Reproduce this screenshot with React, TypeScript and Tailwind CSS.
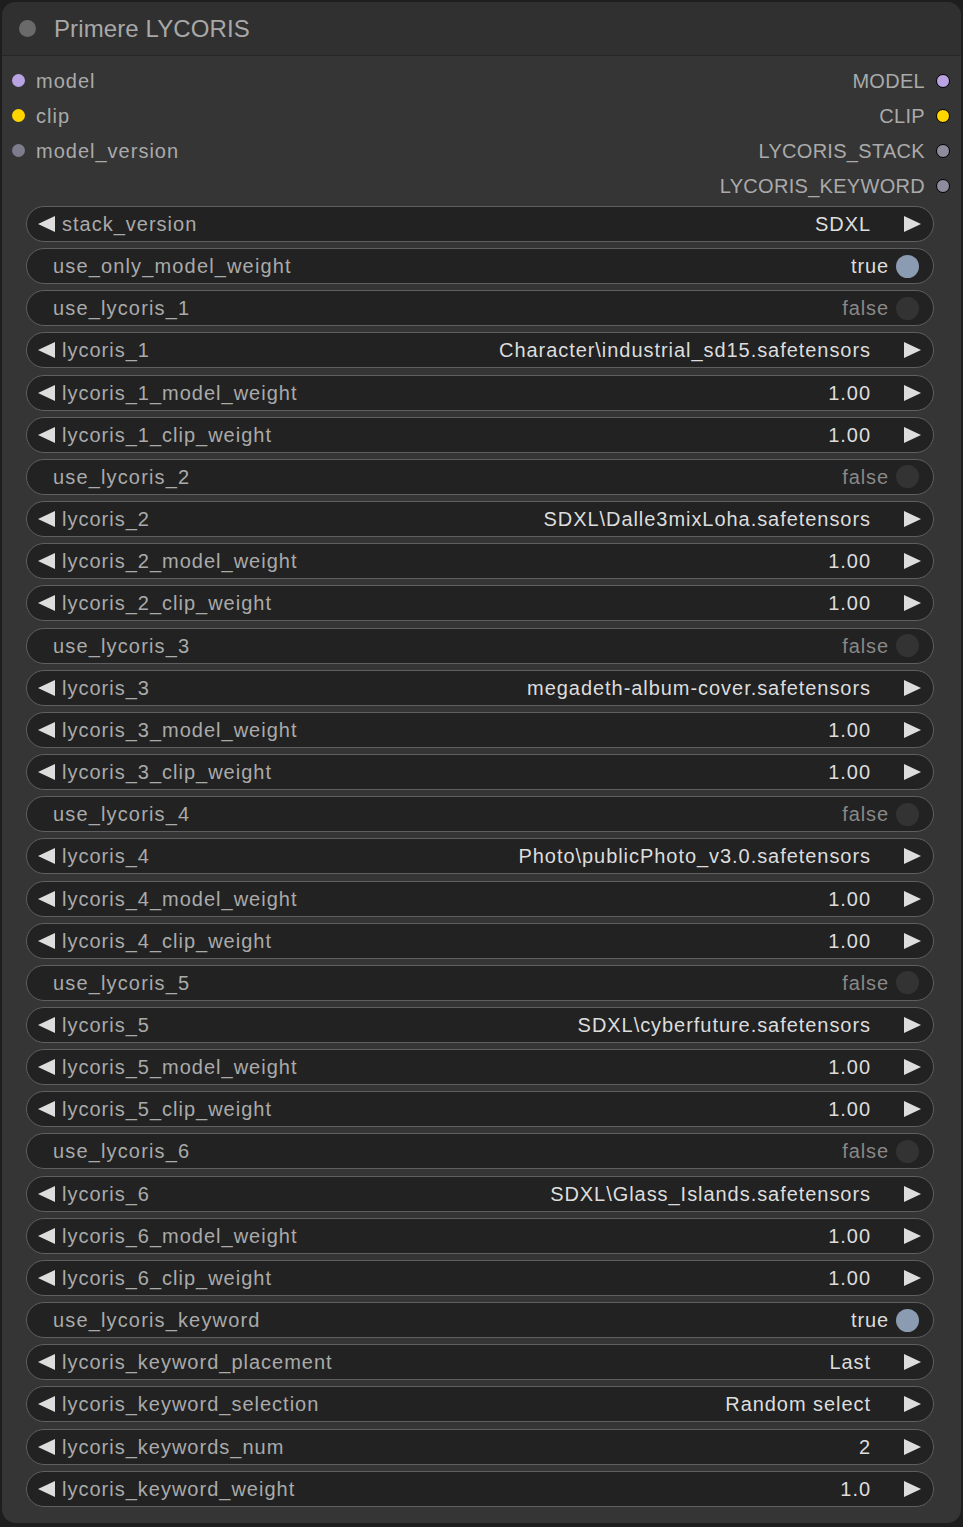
import React from "react";

type W =
  | { kind: "combo"; label: string; value: string }
  | { kind: "toggle"; label: string; value: boolean };

const widgets: W[] = [
  { kind: "combo", label: "stack_version", value: "SDXL" },
  { kind: "toggle", label: "use_only_model_weight", value: true },
];
const files = [
  "Character\\industrial_sd15.safetensors",
  "SDXL\\Dalle3mixLoha.safetensors",
  "megadeth-album-cover.safetensors",
  "Photo\\publicPhoto_v3.0.safetensors",
  "SDXL\\cyberfuture.safetensors",
  "SDXL\\Glass_Islands.safetensors",
];
files.forEach((f, i) => {
  const n = i + 1;
  widgets.push({ kind: "toggle", label: `use_lycoris_${n}`, value: false });
  widgets.push({ kind: "combo", label: `lycoris_${n}`, value: f });
  widgets.push({ kind: "combo", label: `lycoris_${n}_model_weight`, value: "1.00" });
  widgets.push({ kind: "combo", label: `lycoris_${n}_clip_weight`, value: "1.00" });
});
widgets.push({ kind: "toggle", label: "use_lycoris_keyword", value: true });
widgets.push({ kind: "combo", label: "lycoris_keyword_placement", value: "Last" });
widgets.push({ kind: "combo", label: "lycoris_keyword_selection", value: "Random select" });
widgets.push({ kind: "combo", label: "lycoris_keywords_num", value: "2" });
widgets.push({ kind: "combo", label: "lycoris_keyword_weight", value: "1.0" });

const LeftArrow = () => (
  <svg width="17" height="16" viewBox="0 0 17 16" className="shrink-0">
    <polygon points="17,0 17,16 0,8" fill="#dddddd" />
  </svg>
);
const RightArrow = () => (
  <svg width="17" height="16" viewBox="0 0 17 16" className="shrink-0">
    <polygon points="0,0 0,16 17,8" fill="#dddddd" />
  </svg>
);

function Widget({ w }: { w: W }) {
  if (w.kind === "combo") {
    return (
      <div className="flex h-[36px] items-center rounded-full border border-[#5f5f5f] bg-[#222222] pl-[11px] pr-[12px]">
        <LeftArrow />
        <span className="ml-[7px] text-[20px] tracking-[1px] text-[#aaaaaa]">{w.label}</span>
        <span className="ml-auto mr-[33px] whitespace-pre text-[20px] tracking-[0.95px] text-[#dddddd]">{w.value}</span>
        <RightArrow />
      </div>
    );
  }
  return (
    <div className="flex h-[36px] items-center rounded-full border border-[#5f5f5f] bg-[#222222] pl-[26px] pr-[14px]">
      <span className="text-[20px] tracking-[1.15px] text-[#aaaaaa]">{w.label}</span>
      <span
        className={
          "ml-auto mr-[7px] text-[20px] tracking-[0.9px] " +
          (w.value ? "text-[#dddddd]" : "text-[#888888]")
        }
      >
        {w.value ? "true" : "false"}
      </span>
      <div
        className={
          "h-[23px] w-[23px] rounded-full " + (w.value ? "bg-[#8b9bb1]" : "bg-[#333333]")
        }
      />
    </div>
  );
}

function InSlot({ label, color }: { label: string; color: string }) {
  return (
    <div className="flex h-[35px] items-center">
      <div className="ml-[10px] h-[13px] w-[13px] rounded-full" style={{ background: color }} />
      <span className="ml-[11px] text-[20px] tracking-[1px] text-[#aaaaaa]">{label}</span>
    </div>
  );
}

function OutSlot({ label, color }: { label: string; color: string }) {
  return (
    <div className="flex h-[35px] items-center justify-end">
      <span className="mr-[11px] text-[20px] tracking-[0.3px] text-[#aaaaaa]">{label}</span>
      <div
        className="mr-[11px] h-[14px] w-[14px] rounded-full border-[1.5px] border-black"
        style={{ background: color }}
      />
    </div>
  );
}

export default function App() {
  return (
    <div
      className="h-[1527px] w-[963px] bg-[#1e1e1e] p-[2px]"
      style={{ fontFamily: '"Liberation Sans", Arial, sans-serif' }}
    >
      <div className="h-[1521px] w-[959px] overflow-hidden rounded-[14px] bg-[#353535]">
        <div className="flex h-[54px] items-center border-b border-[#262626] bg-[#303030]">
          <div className="ml-[17px] h-[17px] w-[17px] rounded-full bg-[#6a6a6a]" />
          <span className="ml-[18px] text-[24px] tracking-[0.1px] text-[#a8a8a8]">Primere LYCORIS</span>
        </div>
        <div className="flex pt-[7px]">
          <div className="flex-1">
            <InSlot label="model" color="#b9a3e3" />
            <InSlot label="clip" color="#ffd500" />
            <InSlot label="model_version" color="#7c7c8c" />
          </div>
          <div className="flex-1">
            <OutSlot label="MODEL" color="#b9a3e3" />
            <OutSlot label="CLIP" color="#ffd500" />
            <OutSlot label="LYCORIS_STACK" color="#8c8c9c" />
            <OutSlot label="LYCORIS_KEYWORD" color="#8c8c9c" />
          </div>
        </div>
        <div className="ml-[24px] mt-[3px] flex w-[908px] flex-col gap-[6.17px]">
          {widgets.map((w, i) => (
            <Widget key={i} w={w} />
          ))}
        </div>
      </div>
    </div>
  );
}
